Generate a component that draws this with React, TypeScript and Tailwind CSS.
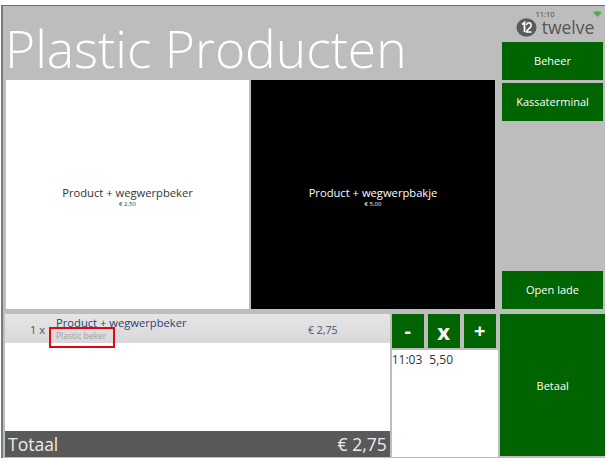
import React from "react";

const green = "bg-[#006400] text-white flex items-center justify-center";

const ProductTile: React.FC<{ name: string; price: string; dark?: boolean; width: string }> = ({ name, price, dark, width }) => (
  <div className={`${width} h-full flex flex-col items-center justify-center ${dark ? "bg-black text-white" : "bg-white text-[#333333]"}`}>
    <div className="text-[11.2px] leading-[15px] mt-[3px]">{name}</div>
    <div className="text-[6px] leading-[8px]">{price}</div>
  </div>
);

export default function App() {
  return (
    <div className="w-[606px] h-[461px] bg-white pt-[5px] overflow-hidden font-['Open_Sans',sans-serif]">
      <div className="w-[604px] h-[453px] ml-[1px] border-t border-[#4a7a9c] border-l-2 border-l-[#7a7a7a] bg-[#bdbdbd] flex flex-col">
        {/* top part */}
        <div className="flex h-[304px]">
          <div className="w-[497px] flex flex-col">
            <h1 className="h-[74px] pl-[2px] text-[51.5px] leading-[84px] font-light text-white whitespace-nowrap">Plastic Producten</h1>
            <div className="flex gap-[2px] pl-[3px] h-[229px]">
              <ProductTile width="w-[243px]" name="Product + wegwerpbeker" price="€ 2,50" />
              <ProductTile width="w-[244px]" name="Product + wegwerpbakje" price="€ 5,00" dark />
            </div>
          </div>
          <div className="flex-1 flex flex-col pl-[2px] pr-[2px]">
            <div className="h-[35px] flex flex-col items-center relative">
              <div className="text-[7.5px] leading-[7px] text-[#444444] mt-[5px] mr-[15px]">11:10</div>
              <div className="flex items-center gap-[4px] ml-[4px]">
                <svg className="shrink-0" width="23" height="19" viewBox="0 0 21 19">
                  <ellipse cx="10.5" cy="9.5" rx="10" ry="9.2" fill="#5a5a5a" />
                  <path d="M6 6.5 L8.5 4.5 V14" stroke="#fff" strokeWidth="1.8" fill="none" />
                  <path d="M10.5 7 C11 3.5 16 4.5 15 8 C14.2 10.5 11 11.5 10.5 14 H15.5" stroke="#fff" strokeWidth="1.6" fill="none" />
                </svg>
                <span className="text-[17.5px] leading-[15px] text-[#555555] font-medium">twelve</span>
              </div>
              <svg className="absolute right-[1px] top-[5px]" width="9" height="6" viewBox="0 0 9 6">
                <path d="M0 1.5 Q4.5 -1 9 1.5 L4.5 6 Z" fill="#4caf50" />
              </svg>
            </div>
            <div className={`${green} h-[38px] mt-[1px] text-[11px]`}>Beheer</div>
            <div className={`${green} h-[38px] mt-[3px] text-[11px]`}>Kassaterminal</div>
            <div className={`${green} h-[38px] mt-auto mb-[1px] text-[11px]`}>Open lade</div>
          </div>
        </div>

        {/* bottom part */}
        <div className="flex mt-[4px] h-[143px]">
          <div className="w-[386px] ml-[2px] h-full flex flex-col bg-white relative">
            <div className="h-[29px] bg-gradient-to-b from-[#e6e6e6] to-[#d8d8d8] flex text-[#2f3f73]">
              <div className="w-[40px] text-right text-[11px] leading-[31px] text-[#44506f]">1 x</div>
              <div className="ml-[11px] w-[252px] pt-px">
                <div className="text-[11.2px] leading-[15px]">Product + wegwerpbeker</div>
                <div className="text-[8.5px] leading-[10px] text-[#a0a0a0] mt-px">Plastic beker</div>
              </div>
              <div className="text-[10.5px] leading-[33px] text-[#44506f]">€ 2,75</div>
            </div>
            <div className="absolute left-[44px] top-[13px] w-[66px] h-[21px] border-[2px] border-[#e30613]" />
            <div className="mt-auto h-[26px] bg-[#595959] text-[#ececec] flex justify-between items-center pl-[3px] pr-[3px] text-[17.5px] leading-[26px]">
              <span>Totaal</span>
              <span>€ 2,75</span>
            </div>
          </div>
          <div className="w-[107px] ml-[2px] flex flex-col">
            <div className="flex gap-[4px] h-[34px] pr-[2px]">
              <div className={`${green} w-[32px] text-[20px] font-bold`}>-</div>
              <div className={`${green} w-[32px] text-[22px] font-bold`}>x</div>
              <div className={`${green} w-[32px] text-[20px] font-bold`}>+</div>
            </div>
            <div className="flex-1 mt-[2px] bg-white text-[12px] leading-[20px] text-[#333333] flex gap-[7px]">
              <span>11:03</span>
              <span>5,50</span>
            </div>
          </div>
          <div className={`${green} ml-[2px] w-[105px] h-[142px] text-[11px] pt-[2px]`}>Betaal</div>
        </div>
      </div>
    </div>
  );
}
